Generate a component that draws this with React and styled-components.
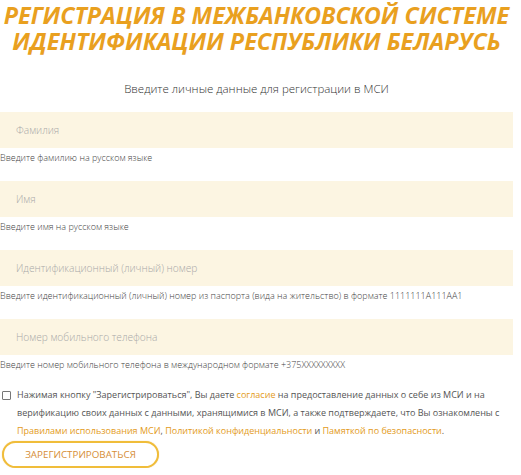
import React from "react";
import styled, { createGlobalStyle } from "styled-components";

const Global = createGlobalStyle`
  html, body { margin: 0; padding: 0; background: #fff; }
  body { font-family: "Open Sans", "Liberation Sans", sans-serif; }
  * { box-sizing: border-box; }
`;

const Page = styled.div`
  width: 521px;
  padding: 0 8px 0 0;
  display: flex;
  flex-direction: column;
`;

const Title = styled.h1`
  margin: 2px 0 0;
  text-align: center;
  font-family: "Open Sans", "Liberation Sans", sans-serif;
  font-style: italic;
  font-weight: 700;
  font-size: 23.4px;
  line-height: 26px;
  color: #e9a01f;
  white-space: nowrap;
`;

const Subtitle = styled.p`
  margin: 27px 0 0;
  text-align: center;
  font-size: 11.5px;
  font-weight: 300;
  color: #333;
  line-height: 16px;
`;

const Form = styled.form`
  display: flex;
  flex-direction: column;
  margin-top: 15px;
`;

const Field = styled.div`
  display: flex;
  flex-direction: column;
  margin-bottom: 17px;
  &:last-of-type { margin-bottom: 0; }
`;

const Input = styled.input`
  height: 36px;
  width: 513px;
  border: none;
  outline: none;
  background: #fcf5e2;
  padding: 0 16px;
  font-family: "Open Sans", "Liberation Sans", sans-serif;
  font-size: 10.2px;
  font-weight: 300;
  color: #444;
  &::placeholder { color: #a8a8a8; }
`;

const Hint = styled.span`
  margin-top: 4px;
  font-size: 9px;
  font-weight: 300;
  line-height: 12px;
  color: #444;
  white-space: nowrap;
`;

const Consent = styled.label`
  display: flex;
  align-items: flex-start;
  gap: 6px;
  margin-top: 15px;
  font-size: 9px;
  line-height: 18px;
  color: #555;
`;

const Box = styled.input`
  appearance: none;
  flex: none;
  width: 9px;
  height: 9px;
  margin: 5px 0 0 2px;
  border: 1px solid #777;
  border-radius: 1px;
  background: #fff;
`;

const Link = styled.a`
  color: #e39b22;
  text-decoration: none;
`;

const Button = styled.button`
  margin: 1px 0 0 2px;
  width: 157px;
  height: 27px;
  border-radius: 14px;
  border: 2px solid #f0bd3a;
  background: #fff;
  color: #d68e36;
  font-family: "Open Sans", "Liberation Sans", sans-serif;
  font-size: 9.8px;
  font-weight: 500;
  align-self: flex-start;
  box-shadow: 0 0 1px rgba(230, 160, 30, 0.6);
`;

const fields = [
  ["Фамилия", "Введите фамилию на русском языке"],
  ["Имя", "Введите имя на русском языке"],
  ["Идентификационный (личный) номер", "Введите идентификационный (личный) номер из паспорта (вида на жительство) в формате 1111111A111AA1"],
  ["Номер мобильного телефона", "Введите номер мобильного телефона в международном формате +375XXXXXXXXX"],
];

export default function App() {
  return (
    <Page>
      <Global />
      <Title>
        РЕГИСТРАЦИЯ В МЕЖБАНКОВСКОЙ СИСТЕМЕ
        <br />
        ИДЕНТИФИКАЦИИ РЕСПУБЛИКИ БЕЛАРУСЬ
      </Title>
      <Subtitle>Введите личные данные для регистрации в МСИ</Subtitle>
      <Form onSubmit={(e) => e.preventDefault()}>
        {fields.map(([ph, hint]) => (
          <Field key={ph}>
            <Input placeholder={ph} />
            <Hint>{hint}</Hint>
          </Field>
        ))}
        <Consent>
          <Box type="checkbox" />
          <span>
            Нажимая кнопку "Зарегистрироваться", Вы даете <Link href="#">согласие</Link> на предоставление данных о себе из МСИ и на верификацию своих данных с данными, хранящимися в МСИ, а также подтверждаете, что Вы ознакомлены с{" "}
            <Link href="#">Правилами использования МСИ</Link>, <Link href="#">Политикой конфиденциальности</Link> и <Link href="#">Памяткой по безопасности</Link>.
          </span>
        </Consent>
        <Button type="submit">ЗАРЕГИСТРИРОВАТЬСЯ</Button>
      </Form>
    </Page>
  );
}
